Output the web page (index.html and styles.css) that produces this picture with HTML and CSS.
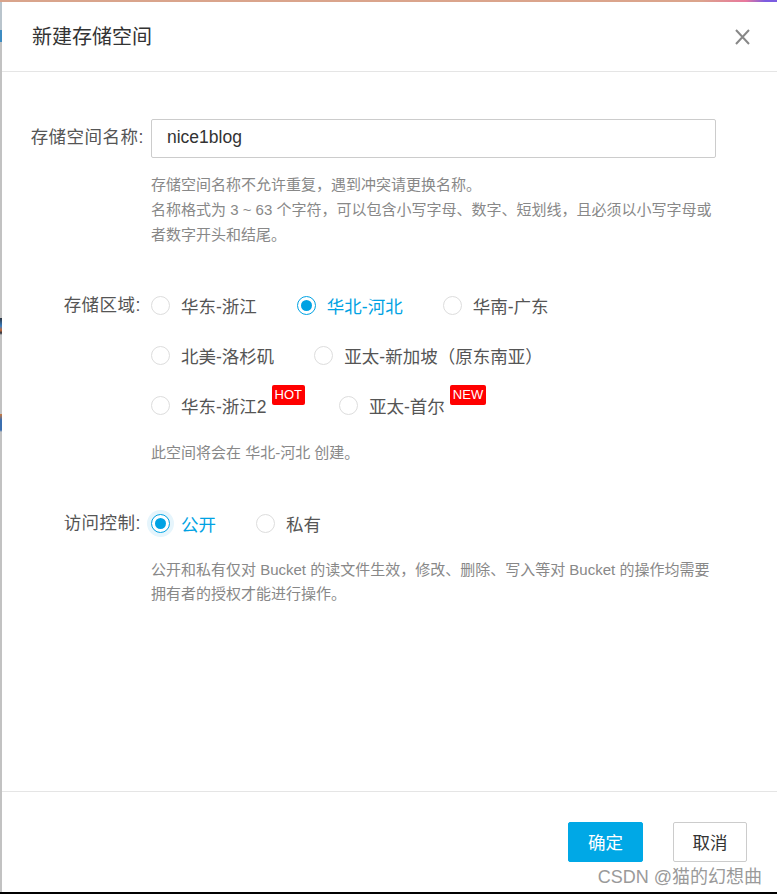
FILE: index.html
```html
<!DOCTYPE html>
<html lang="zh-CN">
<head>
<meta charset="utf-8">
<title>新建存储空间</title>
<link rel="stylesheet" href="styles.css">
</head>
<body>
<div class="screen">
  <div class="topline"></div>
  <div class="middle">
    <div class="edge"></div>
    <div class="dialog">
      <header class="dlg-head">
        <h2 class="dlg-title">新建存储空间</h2>
        <button class="close" aria-label="关闭">
          <svg width="15" height="16" viewBox="0 0 15 16"><path d="M1 1 L14 15 M14 1 L1 15" stroke="#888" stroke-width="2" fill="none"/></svg>
        </button>
      </header>
      <div class="dlg-body">
        <section class="sec sec-name">
          <div class="row">
            <label class="lbl lbl-input">存储空间名称:</label>
            <div class="content">
              <input class="txt" type="text" value="nice1blog">
              <p class="help help-a">存储空间名称不允许重复，遇到冲突请更换名称。<br>名称格式为 3 ~ 63 个字符，可以包含小写字母、数字、短划线，且必须以小写字母或<br>者数字开头和结尾。</p>
            </div>
          </div>
        </section>
        <section class="sec sec-region">
          <div class="row">
            <label class="lbl lbl-radio">存储区域:</label>
            <div class="content">
              <div class="opts">
                <span class="opt"><i class="radio"></i><span>华东-浙江</span></span>
                <span class="opt on"><i class="radio"></i><span>华北-河北</span></span>
                <span class="opt"><i class="radio"></i><span>华南-广东</span></span>
              </div>
              <div class="opts">
                <span class="opt"><i class="radio"></i><span>北美-洛杉矶</span></span>
                <span class="opt"><i class="radio"></i><span>亚太-新加坡（原东南亚）</span></span>
              </div>
              <div class="opts">
                <span class="opt"><i class="radio"></i><span>华东-浙江2</span><b class="badge">HOT</b></span>
                <span class="opt"><i class="radio"></i><span>亚太-首尔</span><b class="badge">NEW</b></span>
              </div>
              <p class="help help-b">此空间将会在 华北-河北 创建。</p>
            </div>
          </div>
        </section>
        <section class="sec sec-acl">
          <div class="row">
            <label class="lbl lbl-radio">访问控制:</label>
            <div class="content">
              <div class="opts">
                <span class="opt on focus"><i class="radio"></i><span>公开</span></span>
                <span class="opt"><i class="radio"></i><span>私有</span></span>
              </div>
              <p class="help help-c">公开和私有仅对 Bucket 的读文件生效，修改、删除、写入等对 Bucket 的操作均需要<br>拥有者的授权才能进行操作。</p>
            </div>
          </div>
        </section>
      </div>
      <footer class="dlg-foot">
        <button class="btn btn-primary">确定</button>
        <button class="btn">取消</button>
      </footer>
    </div>
  </div>
  <div class="band"></div>
  <div class="watermark">CSDN @猫的幻想曲</div>
</div>
</body>
</html>
```

FILE: styles.css
```css
* { box-sizing: border-box; }
html, body { margin: 0; padding: 0; background: #fff; }
body {
  font-family: "Liberation Sans", "Noto Sans CJK SC", sans-serif;
  color: #555;
}
.screen {
  position: relative;
  width: 777px;
  height: 894px;
  display: flex;
  flex-direction: column;
  overflow: hidden;
}
.topline {
  height: 2px;
  flex: none;
  background: linear-gradient(90deg, #d9a48c 0%, #dba48c 90%, #e8789c 96%, #7b5ce0 98.5%, #7b5ce0 100%);
}
.middle {
  flex: 1;
  display: flex;
  min-height: 0;
}
.edge {
  width: 2px;
  flex: none;
  background: linear-gradient(180deg,
    #b9c4cc 0px, #b9c4cc 28px, #3d8cc2 28px, #3d8cc2 40px,
    #c2c2c2 40px, #c2c2c2 316px, #2c3440 316px, #3b7fc0 324px, #c76a3a 328px, #2c3440 331px,
    #c2c2c2 333px, #c2c2c2 412px, #d0783a 412px, #3b6fb0 418px, #3b6fb0 428px,
    #c2c2c2 430px, #c2c2c2 100%);
}
.dialog {
  flex: 1;
  display: flex;
  flex-direction: column;
  min-width: 0;
}
.dlg-head {
  height: 70px;
  flex: none;
  border-bottom: 1px solid #e5e5e5;
  display: flex;
  align-items: center;
  justify-content: space-between;
  padding: 1px 27px 0 30px;
}
.dlg-title {
  margin: 0;
  font-size: 20px;
  font-weight: normal;
  color: #333;
  line-height: 24px;
}
.close {
  border: 0;
  background: none;
  padding: 0;
  width: 15px;
  height: 16px;
  display: block;
}
.close svg { display: block; }
.dlg-body {
  flex: 1;
  padding-right: 61px;
}
.sec-name { margin-top: 47px; }
.sec-region { margin-top: 35px; }
.sec-acl { margin-top: 35px; }
.row {
  display: flex;
  align-items: flex-start;
}
.lbl {
  width: 143px;
  margin-right: 6px;
  flex: none;
  text-align: right;
  font-size: 17.5px;
  line-height: 50px;
  color: #555;
  letter-spacing: 0.5px;
}
.lbl-input { line-height: 37px; padding-right: 1px; }
.lbl-radio { padding-right: 4px; line-height: 47px; }
.content { flex: 1; min-width: 0; }
.txt {
  display: block;
  width: 100%;
  height: 39px;
  margin: 0;
  border: 1px solid #ccc;
  border-radius: 2px;
  padding: 0 15px 2px;
  font-family: "Liberation Sans", "Noto Sans CJK SC", sans-serif;
  font-size: 17.5px;
  color: #333;
  outline: none;
}
.help {
  margin: 0;
  font-size: 15px;
  color: #888;
}
.help-a { margin-top: 14px; line-height: 25px; }
.help-b { margin-top: 8px; line-height: 25px; }
.help-c { margin-top: 8px; line-height: 24px; }
.opts {
  display: flex;
  height: 50px;
  padding-bottom: 3px;
  gap: 40px;
  font-size: 17.5px;
}
.opt {
  display: flex;
  align-items: center;
  color: #555;
  white-space: nowrap;
}
.radio {
  width: 19px;
  height: 19px;
  border: 1px solid #ddd;
  border-radius: 50%;
  margin-right: 11px;
  flex: none;
  display: flex;
  align-items: center;
  justify-content: center;
  background: #fff;
}
.opt.on { color: #00a2e3; }
.opt.on .radio { border-color: #00a2e3; }
.opt.on .radio::after {
  content: "";
  width: 11px;
  height: 11px;
  border-radius: 50%;
  background: #00a2e3;
}
.opt.focus .radio { box-shadow: 0 0 0 4px #e6f5fc; }
.badge {
  align-self: flex-start;
  margin-top: 3px;
  margin-left: 5px;
  margin-right: -6px;
  height: 20px;
  padding: 0 3px;
  background: #f00;
  color: #fff;
  border-radius: 2px;
  font-weight: normal;
  font-size: 13px;
  line-height: 20px;
  font-family: "Liberation Sans", sans-serif;
}
.dlg-foot {
  height: 101px;
  flex: none;
  border-top: 1px solid #e5e5e5;
  display: flex;
  justify-content: flex-end;
  align-items: flex-start;
  gap: 30px;
  padding: 30px 30px 0 0;
}
.btn {
  height: 40px;
  width: 74px;
  border: 1px solid #ccc;
  border-radius: 2px;
  background: #fff;
  color: #333;
  font-family: "Liberation Sans", "Noto Sans CJK SC", sans-serif;
  font-size: 17.5px;
  padding: 0 0 2px;
}
.btn-primary {
  width: 75px;
  background: #00a8e6;
  border-color: #00a8e6;
  color: #fff;
}
.band {
  height: 2px;
  flex: none;
  background: #000;
}
.watermark {
  position: absolute;
  right: 15px;
  bottom: 7px;
  font-size: 18px;
  line-height: 20px;
  color: #9a9a9a;
  text-shadow: 0 0 2px #fff, 0 0 2px #fff;
  white-space: nowrap;
}
```
